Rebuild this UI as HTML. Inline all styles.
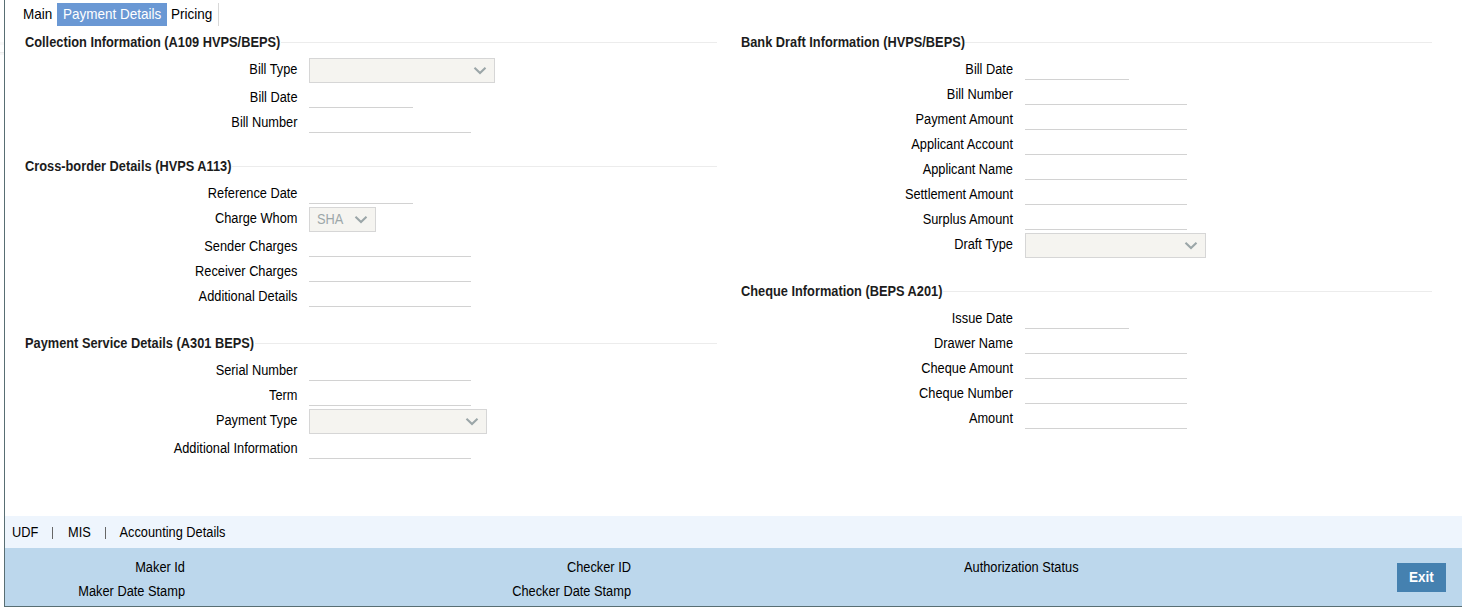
<!DOCTYPE html>
<html><head><meta charset="utf-8">
<style>
*{box-sizing:border-box}
html,body{margin:0;padding:0;width:1462px;height:608px;overflow:hidden;background:#fff;font-family:"Liberation Sans",sans-serif;color:#000}
.a{position:absolute;white-space:nowrap}
.lb,.lt,.hd,.tb{position:absolute;white-space:nowrap;font-size:12.8px;line-height:15px;transform:scaleY(1.11);transform-origin:0 12px}
.lb{width:300px;text-align:right}
.hd{font-weight:bold;color:#1c1c1c}
.tb{font-size:13.5px;line-height:18px;transform-origin:0 13.7px;transform:scaleY(1.09)}
.hl{position:absolute;height:1px;background:#ececec}
.ul{position:absolute;height:1px;background:#d2d2d2}
.sel{position:absolute;height:25px;background:#f5f4f0;border:1px solid #d6d6d6}
.chev{position:absolute;top:7px;width:14px;height:9px}
</style></head><body>
<div class="a" style="left:4px;top:0;width:1px;height:607px;background:#586e73"></div>
<div class="a" style="left:0;top:42px;width:4px;height:3px;background:#f8f8f8"></div>
<div class="a" style="left:0;top:52px;width:4px;height:1px;background:#ececec"></div>
<div class="a" style="left:0;top:53px;width:4px;height:2px;background:#f7f7f7"></div>
<div class="tb" style="left:23px;top:6px">Main</div>
<div class="a" style="left:57px;top:3px;width:110px;height:23px;background:#6a98d4"></div>
<div class="tb" style="left:63px;top:6px;color:#fff">Payment Details</div>
<div class="tb" style="left:171px;top:6px">Pricing</div>
<div class="a" style="left:218px;top:3px;width:1px;height:23px;background:#d8d8d8"></div>
<div class="hd" style="left:25px;top:35px">Collection Information (A109 HVPS/BEPS)</div><div class="hl" style="left:281px;top:42px;width:436px"></div>
<div class="lb" style="left:-2.5px;top:62px;">Bill Type</div>
<div class="sel" style="left:309px;top:58px;width:186px"><svg class="chev" style="left:163px" viewBox="0 0 14 9"><path d="M1.5 1.8 L7 7 L12.5 1.8" fill="none" stroke="#9ba6a8" stroke-width="2.1"/></svg></div>
<div class="lb" style="left:-2.5px;top:90px;">Bill Date</div>
<div class="ul" style="left:309px;top:107px;width:104px"></div>
<div class="lb" style="left:-2.5px;top:115px;">Bill Number</div>
<div class="ul" style="left:309px;top:132px;width:162px"></div>
<div class="hd" style="left:25px;top:159px">Cross-border Details (HVPS A113)</div><div class="hl" style="left:232px;top:166px;width:485px"></div>
<div class="lb" style="left:-2.5px;top:186px;">Reference Date</div>
<div class="ul" style="left:309px;top:203px;width:104px"></div>
<div class="lb" style="left:-2.5px;top:211px;">Charge Whom</div>
<div class="sel" style="left:309px;top:207px;width:67px"><span class="lt" style="left:7px;top:4px;color:#9ca7a9">SHA</span><svg class="chev" style="left:44px" viewBox="0 0 14 9"><path d="M1.5 1.8 L7 7 L12.5 1.8" fill="none" stroke="#9ba6a8" stroke-width="2.1"/></svg></div>
<div class="lb" style="left:-2.5px;top:239px;">Sender Charges</div>
<div class="ul" style="left:309px;top:256px;width:162px"></div>
<div class="lb" style="left:-2.5px;top:264px;">Receiver Charges</div>
<div class="ul" style="left:309px;top:281px;width:162px"></div>
<div class="lb" style="left:-2.5px;top:289px;">Additional Details</div>
<div class="ul" style="left:309px;top:306px;width:162px"></div>
<div class="hd" style="left:25px;top:336px">Payment Service Details (A301 BEPS)</div><div class="hl" style="left:255px;top:343px;width:462px"></div>
<div class="lb" style="left:-2.5px;top:363px;">Serial Number</div>
<div class="ul" style="left:309px;top:380px;width:162px"></div>
<div class="lb" style="left:-2.5px;top:388px;">Term</div>
<div class="ul" style="left:309px;top:405px;width:162px"></div>
<div class="lb" style="left:-2.5px;top:413px;">Payment Type</div>
<div class="sel" style="left:309px;top:409px;width:178px"><svg class="chev" style="left:155px" viewBox="0 0 14 9"><path d="M1.5 1.8 L7 7 L12.5 1.8" fill="none" stroke="#9ba6a8" stroke-width="2.1"/></svg></div>
<div class="lb" style="left:-2.5px;top:441px;">Additional Information</div>
<div class="ul" style="left:309px;top:458px;width:162px"></div>
<div class="hd" style="left:741px;top:35px">Bank Draft Information (HVPS/BEPS)</div><div class="hl" style="left:965px;top:42px;width:467px"></div>
<div class="lb" style="left:713px;top:62px;">Bill Date</div>
<div class="ul" style="left:1025px;top:79px;width:104px"></div>
<div class="lb" style="left:713px;top:87px;">Bill Number</div>
<div class="ul" style="left:1025px;top:104px;width:162px"></div>
<div class="lb" style="left:713px;top:112px;">Payment Amount</div>
<div class="ul" style="left:1025px;top:129px;width:162px"></div>
<div class="lb" style="left:713px;top:137px;">Applicant Account</div>
<div class="ul" style="left:1025px;top:154px;width:162px"></div>
<div class="lb" style="left:713px;top:162px;">Applicant Name</div>
<div class="ul" style="left:1025px;top:179px;width:162px"></div>
<div class="lb" style="left:713px;top:187px;">Settlement Amount</div>
<div class="ul" style="left:1025px;top:204px;width:162px"></div>
<div class="lb" style="left:713px;top:212px;">Surplus Amount</div>
<div class="ul" style="left:1025px;top:229px;width:162px"></div>
<div class="lb" style="left:713px;top:237px;">Draft Type</div>
<div class="sel" style="left:1025px;top:233px;width:181px"><svg class="chev" style="left:158px" viewBox="0 0 14 9"><path d="M1.5 1.8 L7 7 L12.5 1.8" fill="none" stroke="#9ba6a8" stroke-width="2.1"/></svg></div>
<div class="hd" style="left:741px;top:284px">Cheque Information (BEPS A201)</div><div class="hl" style="left:943px;top:291px;width:489px"></div>
<div class="lb" style="left:713px;top:311px;">Issue Date</div>
<div class="ul" style="left:1025px;top:328px;width:104px"></div>
<div class="lb" style="left:713px;top:336px;">Drawer Name</div>
<div class="ul" style="left:1025px;top:353px;width:162px"></div>
<div class="lb" style="left:713px;top:361px;">Cheque Amount</div>
<div class="ul" style="left:1025px;top:378px;width:162px"></div>
<div class="lb" style="left:713px;top:386px;">Cheque Number</div>
<div class="ul" style="left:1025px;top:403px;width:162px"></div>
<div class="lb" style="left:713px;top:411px;">Amount</div>
<div class="ul" style="left:1025px;top:428px;width:162px"></div>
<div class="a" style="left:5px;top:516px;width:1457px;height:32px;background:#eef5fd"></div>
<div class="lt" style="left:12px;top:525px;">UDF</div>
<div class="lt" style="left:68px;top:525px;">MIS</div>
<div class="lt" style="left:119.5px;top:525px;">Accounting Details</div>
<div class="a" style="left:52px;top:527px;width:1px;height:12px;background:#666"></div>
<div class="a" style="left:105px;top:527px;width:1px;height:12px;background:#666"></div>
<div class="a" style="left:5px;top:548px;width:1457px;height:58px;background:#bcd7ec"></div>
<div class="a" style="left:5px;top:606px;width:1457px;height:1px;background:#586e73"></div>
<div class="lb" style="left:-115px;top:560px;">Maker Id</div>
<div class="lb" style="left:-115px;top:584px;">Maker Date Stamp</div>
<div class="lb" style="left:331px;top:560px;">Checker ID</div>
<div class="lb" style="left:331px;top:584px;">Checker Date Stamp</div>
<div class="lt" style="left:964px;top:560px;">Authorization Status</div>
<div class="a" style="left:1397px;top:563px;width:49px;height:29px;background:#4581b0"></div>
<div class="tb" style="left:1397px;top:569px;width:49px;text-align:center;color:#fff;font-weight:bold">Exit</div>
</body></html>
